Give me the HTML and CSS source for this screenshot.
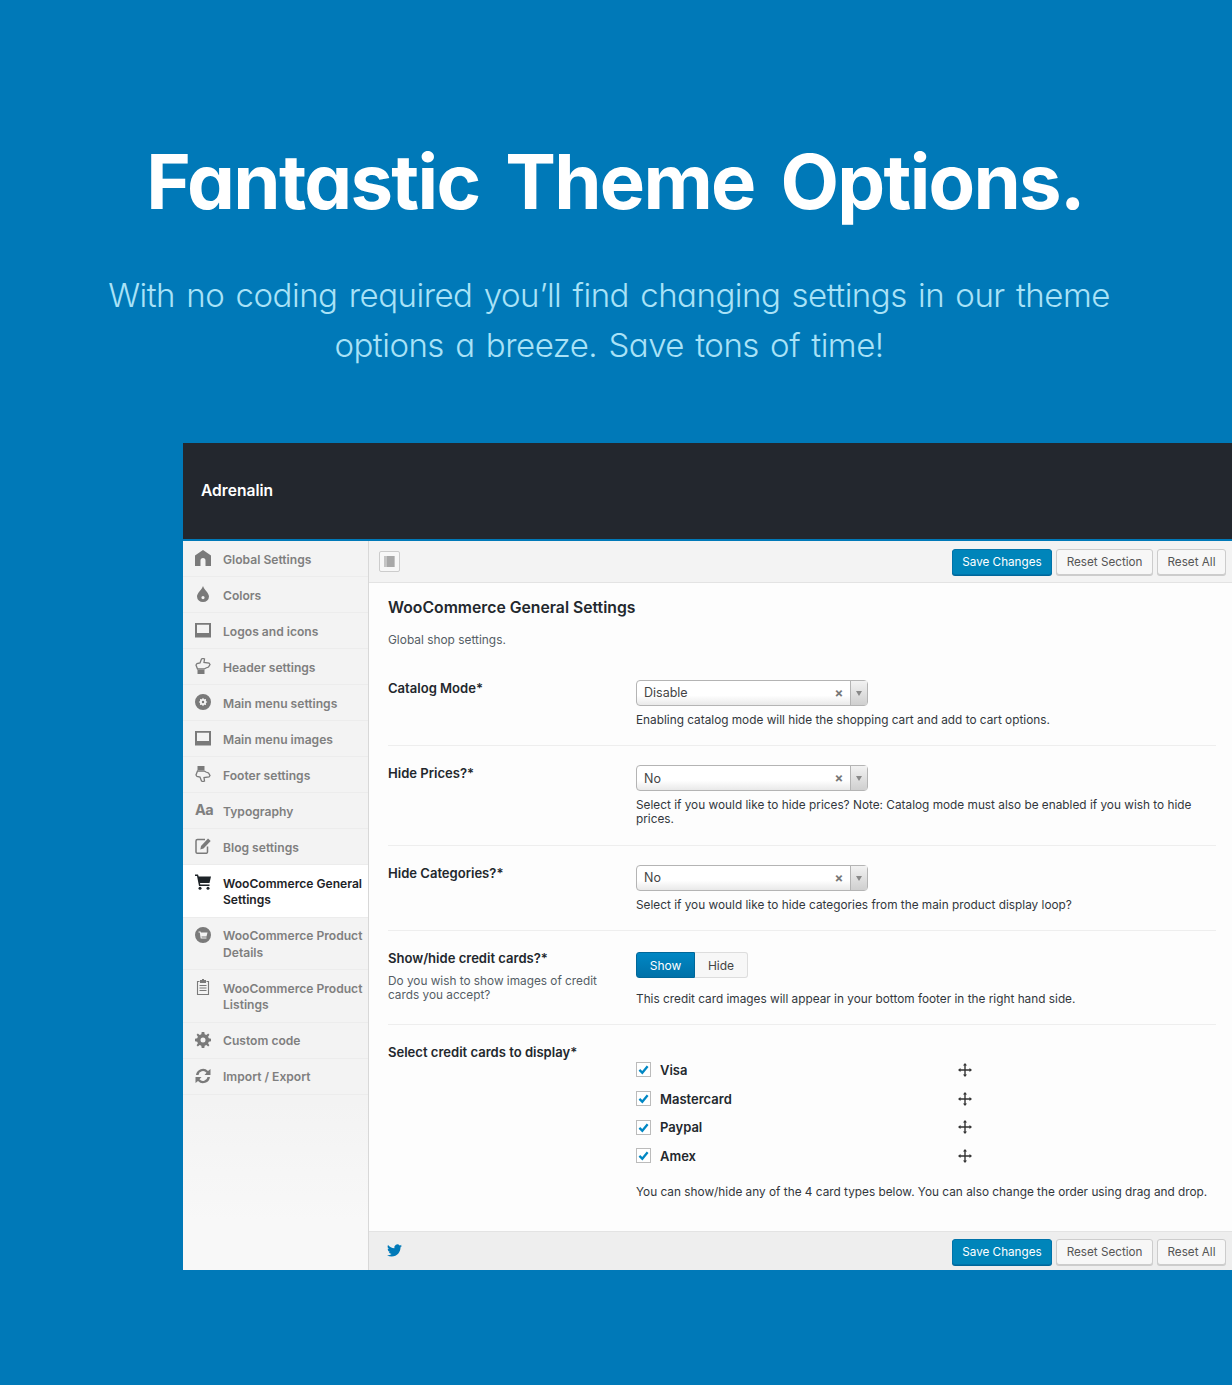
FILE: index.html
```html
<!DOCTYPE html>
<html lang="en">

<head>
    <meta charset="UTF-8" />
    <title>Fantastic Theme Options</title>
    <link rel="stylesheet" href="styles.css">
</head>

<body>

    <header class="hero">
        <h1>Fantastic Theme Options.</h1>
        <p>With no coding required you’ll find changing settings in our theme<br>options a breeze. Save tons of time!</p>
    </header>

    <div class="panel">
        <div class="panel-title">Adrenalin</div>

        <div class="panel-body">
            <ul class="sidebar">
                <li>
                    <svg class="icon" viewBox="0 0 16 16"><path d="M8 0 L16 5.500 V16 H10.500 V10.500 A2.500 2.500 0 0 0 5.500 10.500 V16 H0 V5.500 Z" /></svg>
                    <span>Global Settings</span>
                </li>
                <li>
                    <svg class="icon" viewBox="0 0 16 16"><path fill-rule="evenodd" d="M8 0 C9 3.500 14 7 14 10.500 A6 5.500 0 0 1 2 10.500 C2 7 7 3.500 8 0 Z M8 10 A1.600 1.600 0 1 0 8 13.200 A1.600 1.600 0 1 0 8 10 Z" /></svg>
                    <span>Colors</span>
                </li>
                <li>
                    <svg class="icon" viewBox="0 0 16 16"><path fill-rule="evenodd" d="M0 1 H16 V15.500 H0 Z M2 2.800 V11 H14 V2.800 Z" /></svg>
                    <span>Logos and icons</span>
                </li>
                <li>
                    <svg class="icon" viewBox="0 0 16 16"><path class="line" stroke-width="1.300" d="M2.500 11 L1 7 L2 5.500 L5 5 L6.500 1 L8 0.500 L9.500 1 L9 4.500 L14 5 L15 6.500 L13.500 9 L11 10 L9 11 Z" /><path d="M2.500 12 H9.500 V16 H2.500 Z" /></svg>
                    <span>Header settings</span>
                </li>
                <li>
                    <svg class="icon" viewBox="0 0 16 16"><path fill-rule="evenodd" d="M8 0 A8 8 0 1 0 8 16 A8 8 0 1 0 8 0 Z M8 3.800 L9.100 5.300 L11 5 L10.900 6.900 L12.300 8 L10.900 9.100 L11 11 L9.100 10.700 L8 12.200 L6.900 10.700 L5 11 L5.100 9.100 L3.700 8 L5.100 6.900 L5 5 L6.900 5.300 Z M8 6.800 A1.200 1.200 0 1 1 8 9.200 A1.200 1.200 0 1 1 8 6.800 Z" /></svg>
                    <span>Main menu settings</span>
                </li>
                <li>
                    <svg class="icon" viewBox="0 0 16 16"><path fill-rule="evenodd" d="M0 1 H16 V15.500 H0 Z M2 2.800 V11 H14 V2.800 Z" /></svg>
                    <span>Main menu images</span>
                </li>
                <li>
                    <svg class="icon" viewBox="0 0 16 16"><g transform="matrix(1 0 0 -1 0 16)"><path class="line" stroke-width="1.300" d="M2.500 11 L1 7 L2 5.500 L5 5 L6.500 1 L8 0.500 L9.500 1 L9 4.500 L14 5 L15 6.500 L13.500 9 L11 10 L9 11 Z" /><path d="M2.500 12 H9.500 V16 H2.500 Z" /></g></svg>
                    <span>Footer settings</span>
                </li>
                <li>
                    <span class="icon-text">Aa</span>
                    <span>Typography</span>
                </li>
                <li>
                    <svg class="icon" viewBox="0 0 16 16"><path class="line" stroke-width="1.500" d="M10 1.500 H2.500 Q1 1.500 1 3 V14 Q1 15.300 2.500 15.300 H11 Q12.500 15.300 12.500 14 V8.500" /><path d="M13 0.500 L15.700 3 L8.500 10.500 L5.300 11.500 L6 8 Z" /></svg>
                    <span>Blog settings</span>
                </li>
                <li class="active tall">
                    <svg class="icon" viewBox="0 0 16 16"><path d="M0 0.500 H3 L3.700 2.500 H16 L14.500 9 H5 L5.300 10.500 H14.500 V12 H4 L2 2 H0 Z" /><circle cx="5" cy="14.300" r="1.500" /><circle cx="13" cy="14.300" r="1.500" /></svg>
                    <span>WooCommerce General Settings</span>
                </li>
                <li class="tall">
                    <svg class="icon" viewBox="0 0 16 16"><path fill-rule="evenodd" d="M8 0 A8 8 0 1 0 8 16 A8 8 0 1 0 8 0 Z M3.500 4.500 H5.500 L5.900 5.500 H12.500 L11.500 9.500 H6.500 L6.700 10.500 H11.500 V11.500 H5.700 L4.800 5.500 H3.500 Z" /></svg>
                    <span>WooCommerce Product Details</span>
                </li>
                <li class="tall">
                    <svg class="icon" viewBox="0 0 16 16"><path class="line" stroke-width="1.100" d="M4.500 2.500 H2.500 V15.500 H13.500 V2.500 H11.500" /><path d="M5 1 H7 V0 H9 V1 H11 V4 H5 Z M4.500 6 H11.500 V7 H4.500 Z M4.500 8.500 H11.500 V9.500 H4.500 Z M4.500 11 H11.500 V12 H4.500 Z" /></svg>
                    <span>WooCommerce Product Listings</span>
                </li>
                <li>
                    <svg class="icon" viewBox="0 0 16 16"><path fill-rule="evenodd" d="M6.700 0 H9.300 L9.700 2.200 L11.300 2.900 L13.200 1.600 L14.400 2.800 L13.100 4.700 L13.800 6.300 L16 6.700 V9.300 L13.800 9.700 L13.100 11.300 L14.400 13.200 L13.200 14.400 L11.300 13.100 L9.700 13.800 L9.300 16 H6.700 L6.300 13.800 L4.700 13.100 L2.800 14.400 L1.600 13.200 L2.900 11.300 L2.200 9.700 L0 9.300 V6.700 L2.200 6.300 L2.900 4.700 L1.600 2.800 L2.800 1.600 L4.700 2.900 L6.300 2.200 Z M8 5.500 A2.500 2.500 0 1 0 8 10.500 A2.500 2.500 0 1 0 8 5.500 Z" /></svg>
                    <span>Custom code</span>
                </li>
                <li>
                    <svg class="icon" viewBox="0 0 16 16"><path d="M1 7 A7 7 0 0 1 13 3 L15.500 1 V7 H9.500 L11.500 4.800 A4.500 4.500 0 0 0 3.500 7 Z M15 9 A7 7 0 0 1 3 13 L0.500 15 V9 H6.500 L4.500 11.200 A4.500 4.500 0 0 0 12.500 9 Z" /></svg>
                    <span>Import / Export</span>
                </li>
            </ul>

            <div class="main">
                <div class="toolbar">
                    <span class="expand"><i></i></span>
                    <div class="actions">
                        <button class="btn btn-primary">Save Changes</button>
                        <button class="btn">Reset Section</button>
                        <button class="btn">Reset All</button>
                    </div>
                </div>

                <div class="content">
                    <h2>WooCommerce General Settings</h2>
                    <p class="intro">Global shop settings.</p>

                    <div class="field">
                        <div class="field-label"><h3>Catalog Mode*</h3></div>
                        <div class="field-control">
                            <div class="select"><span>Disable</span><b>&times;</b><em></em></div>
                            <p class="desc">Enabling catalog mode will hide the shopping cart and add to cart options.</p>
                        </div>
                    </div>

                    <div class="field">
                        <div class="field-label"><h3>Hide Prices?*</h3></div>
                        <div class="field-control">
                            <div class="select"><span>No</span><b>&times;</b><em></em></div>
                            <p class="desc">Select if you would like to hide prices? Note: Catalog mode must also be enabled if you wish to hide prices.</p>
                        </div>
                    </div>

                    <div class="field">
                        <div class="field-label"><h3>Hide Categories?*</h3></div>
                        <div class="field-control">
                            <div class="select"><span>No</span><b>&times;</b><em></em></div>
                            <p class="desc">Select if you would like to hide categories from the main product display loop?</p>
                        </div>
                    </div>

                    <div class="field">
                        <div class="field-label">
                            <h3>Show/hide credit cards?*</h3>
                            <p class="sub">Do you wish to show images of credit cards you accept?</p>
                        </div>
                        <div class="field-control">
                            <div class="toggle"><span class="on">Show</span><span>Hide</span></div>
                            <p class="desc">This credit card images will appear in your bottom footer in the right hand side.</p>
                        </div>
                    </div>

                    <div class="field last">
                        <div class="field-label"><h3>Select credit cards to display*</h3></div>
                        <div class="field-control">
                            <ul class="cards">
                                <li><span class="check"><svg viewBox="0 0 12 12"><path d="M1.500 6.500 L4.700 9.500 L10.500 2.500" /></svg></span><strong>Visa</strong><svg class="move" viewBox="0 0 14 14"><path d="M7 0 L9 2.500 H7.700 V6.300 H11.500 V5 L14 7 L11.500 9 V7.700 H7.700 V11.500 H9 L7 14 L5 11.500 H6.300 V7.700 H2.500 V9 L0 7 L2.500 5 V6.300 H6.300 V2.500 H5 Z" /></svg></li>
                                <li><span class="check"><svg viewBox="0 0 12 12"><path d="M1.500 6.500 L4.700 9.500 L10.500 2.500" /></svg></span><strong>Mastercard</strong><svg class="move" viewBox="0 0 14 14"><path d="M7 0 L9 2.500 H7.700 V6.300 H11.500 V5 L14 7 L11.500 9 V7.700 H7.700 V11.500 H9 L7 14 L5 11.500 H6.300 V7.700 H2.500 V9 L0 7 L2.500 5 V6.300 H6.300 V2.500 H5 Z" /></svg></li>
                                <li><span class="check"><svg viewBox="0 0 12 12"><path d="M1.500 6.500 L4.700 9.500 L10.500 2.500" /></svg></span><strong>Paypal</strong><svg class="move" viewBox="0 0 14 14"><path d="M7 0 L9 2.500 H7.700 V6.300 H11.500 V5 L14 7 L11.500 9 V7.700 H7.700 V11.500 H9 L7 14 L5 11.500 H6.300 V7.700 H2.500 V9 L0 7 L2.500 5 V6.300 H6.300 V2.500 H5 Z" /></svg></li>
                                <li><span class="check"><svg viewBox="0 0 12 12"><path d="M1.500 6.500 L4.700 9.500 L10.500 2.500" /></svg></span><strong>Amex</strong><svg class="move" viewBox="0 0 14 14"><path d="M7 0 L9 2.500 H7.700 V6.300 H11.500 V5 L14 7 L11.500 9 V7.700 H7.700 V11.500 H9 L7 14 L5 11.500 H6.300 V7.700 H2.500 V9 L0 7 L2.500 5 V6.300 H6.300 V2.500 H5 Z" /></svg></li>
                            </ul>
                            <p class="desc">You can show/hide any of the 4 card types below. You can also change the order using drag and drop.</p>
                        </div>
                    </div>
                </div>

                <div class="toolbar footer">
                    <svg class="twitter" viewBox="0 0 24 24"><path d="M23.950 4.570a10 10 0 0 1-2.820.770 4.960 4.960 0 0 0 2.160-2.720c-.950.550-2 .950-3.130 1.180a4.920 4.920 0 0 0-8.380 4.480C7.690 8.090 4.070 6.130 1.640 3.160a4.820 4.820 0 0 0-.660 2.470c0 1.710.870 3.210 2.190 4.100a4.900 4.900 0 0 1-2.230-.620v.060a4.920 4.920 0 0 0 3.950 4.830 5 5 0 0 1-2.210.080 4.940 4.940 0 0 0 4.600 3.420A9.870 9.870 0 0 1 0 19.540a14 14 0 0 0 7.560 2.210c9.050 0 14-7.500 14-13.980 0-.210 0-.420-.020-.630a9.940 9.940 0 0 0 2.460-2.550z" /></svg>
                    <div class="actions">
                        <button class="btn btn-primary">Save Changes</button>
                        <button class="btn">Reset Section</button>
                        <button class="btn">Reset All</button>
                    </div>
                </div>
            </div>
        </div>
    </div>

</body>

</html>
```

FILE: styles.css
```css
* {
    box-sizing: border-box;
}

html,
body {
    margin: 0;
    padding: 0;
}

body {
    background: #0079b8;
    height: 1385px;
    overflow: hidden;
    font-family: Inter, 'Liberation Sans', sans-serif;
    color: #23282d;
}

h1,
h2,
h3,
p,
ul {
    margin: 0;
    padding: 0;
}

ul {
    list-style: none;
}

.hero {
    height: 443px;
    padding-top: 135px;
    text-align: center;
    font-family: Inter, sans-serif;
    font-feature-settings: "cv11";
}

.hero h1 {
    font-size: 76px;
    line-height: 92px;
    font-weight: 700;
    color: #fff;
    letter-spacing: -1.700px;
    word-spacing: 9.500px;
    padding-right: 2px;
}

.hero p {
    margin-top: 43px;
    font-size: 33px;
    line-height: 50px;
    font-weight: 300;
    color: #a9e2f7;
    letter-spacing: -0.500px;
    word-spacing: 2.500px;
    padding-right: 14px;
}

.panel {
    margin-left: 183px;
    height: 827px;
    background: #fff;
}

.panel-title {
    height: 98px;
    padding: 0 18px;
    background: #23272e;
    border-bottom: 2.500px solid #0079b8;
    color: #fff;
    font-size: 15.600px;
    line-height: 95px;
    font-weight: 600;
}

.panel-body {
    display: flex;
    height: 729px;
}

.sidebar {
    width: 186px;
    flex: none;
    background: linear-gradient(#f3f3f3 0, #f3f3f3 560px, #f8f8f8 680px);
    border-right: 1px solid #d8d8d8;
}

.sidebar li {
    display: flex;
    gap: 12px;
    min-height: 36px;
    padding: 10.500px 0 0 12px;
    border-bottom: 1px solid #ececec;
    font-size: 12.100px;
    line-height: 16.500px;
    font-weight: 600;
    color: #7f7f7f;
}

.sidebar .tall {
    min-height: 52.500px;
}

.sidebar .active {
    background: #fff;
    color: #1d2327;
}

.icon {
    width: 16px;
    height: 16px;
    flex: none;
    fill: #7a7a7a;
    margin-top: -1.500px;
}

.icon .line {
    fill: none;
    stroke: #7a7a7a;
}

.active .icon {
    fill: #1d2327;
}

.icon-text {
    width: 16px;
    flex: none;
    font-size: 14.500px;
    font-weight: 700;
    margin-top: -2px;
    white-space: nowrap;
    letter-spacing: -0.500px;
}

.main {
    flex: 1;
    display: flex;
    flex-direction: column;
    min-width: 0;
    background: #fdfdfd;
}

.toolbar {
    display: flex;
    align-items: center;
    justify-content: space-between;
    height: 42px;
    padding: 0 6px 0 10px;
    background: #f3f3f3;
    border-bottom: 1px solid #e3e3e3;
}

.toolbar.footer {
    height: 39px;
    padding-top: 2px;
    padding-left: 18px;
    background: #eeeeee;
    border-bottom: 0;
    border-top: 1px solid #e3e3e3;
}

.expand {
    display: block;
    width: 21px;
    height: 21px;
    padding: 4px;
    background: #f7f7f7;
    border: 1px solid #cccccc;
    border-radius: 2px;
}

.expand i {
    display: block;
    height: 100%;
    background: #a8a8a8;
    border-left: 3px solid #c4c4c4;
    border-right: 1px solid #c4c4c4;
}

.actions {
    display: flex;
    gap: 4px;
}

.btn {
    height: 26px;
    padding: 0 9.500px;
    font-family: inherit;
    font-size: 11.700px;
    color: #555;
    background: #f7f7f7;
    border: 1px solid #cccccc;
    border-radius: 3px;
    box-shadow: 0 1px 0 #cccccc;
}

.btn-primary {
    color: #fff;
    background: #0085ba;
    border-color: #0073aa;
    box-shadow: 0 1px 0 #006799;
}

.content {
    flex: 1;
    padding: 15px 16px 0 19px;
}

.content h2 {
    font-size: 15.750px;
    line-height: 20px;
    font-weight: 600;
    color: #23282d;
}

.intro {
    margin: 13px 0 12.500px;
    font-size: 11.900px;
    line-height: 17px;
    color: #555d66;
}

.field {
    display: flex;
    padding: 19px 0 18.500px;
    border-bottom: 1px solid #eeeeee;
}

.field.last {
    border-bottom: 0;
}

.field-label {
    width: 248px;
    flex: none;
    padding-right: 24px;
}

.field-label h3 {
    font-size: 13.050px;
    line-height: 16px;
    font-weight: 600;
    color: #23282d;
}

.sub {
    margin-top: 8px;
    font-size: 11.800px;
    line-height: 14px;
    color: #555d66;
}

.field-control {
    flex: 1;
    min-width: 0;
}

.desc {
    margin-top: 7px;
    font-size: 11.820px;
    line-height: 14px;
    color: #32373c;
}

.select {
    display: flex;
    align-items: center;
    width: 232px;
    height: 26px;
    padding-left: 7px;
    font-size: 12.500px;
    color: #444;
    border: 1px solid #b4b4b4;
    border-radius: 4px;
    background: linear-gradient(#fff 60%, #e9e9e9);
}

.select span {
    flex: 1;
}

.select b {
    width: 18px;
    margin-right: 2px;
    text-align: center;
    font-size: 13px;
    color: #777;
}

.select em {
    display: flex;
    align-items: center;
    justify-content: center;
    align-self: stretch;
    width: 17px;
    border-left: 1px solid #b4b4b4;
    background: linear-gradient(#f2f2f2, #cfcfcf);
}

.select em::after {
    content: "";
    border: 3px solid transparent;
    border-top: 5px solid #888;
    margin-top: 4px;
}

.toggle {
    display: flex;
    height: 26px;
    margin: 2px 0 13.500px;
    font-size: 12px;
    line-height: 25px;
    text-align: center;
}

.toggle span {
    width: 53px;
    color: #444;
    background: #f7f7f7;
    border: 1px solid #dddddd;
    border-left: 0;
    border-radius: 0 3px 3px 0;
}

.toggle .on {
    width: 59px;
    color: #fff;
    background: linear-gradient(#0087c4, #0071a8);
    border: 1px solid #006799;
    border-radius: 3px 0 0 3px;
}

.cards {
    margin-top: 11.700px;
    margin-bottom: 15px;
}

.cards li {
    display: flex;
    align-items: center;
    height: 28.600px;
    font-size: 13px;
}

.cards strong {
    width: 298px;
    margin-left: 9px;
    font-weight: 600;
}

.check {
    display: block;
    width: 15px;
    height: 15px;
    padding: 1px;
    background: #fff;
    border: 1px solid #bbbbbb;
}

.check svg {
    display: block;
    fill: none;
    stroke: #0087c4;
    stroke-width: 2.500;
}

.move {
    width: 14px;
    height: 14px;
    fill: #333;
}

.twitter {
    width: 15px;
    height: 15px;
    fill: #0079b8;
    margin-top: -3px;
}
```
